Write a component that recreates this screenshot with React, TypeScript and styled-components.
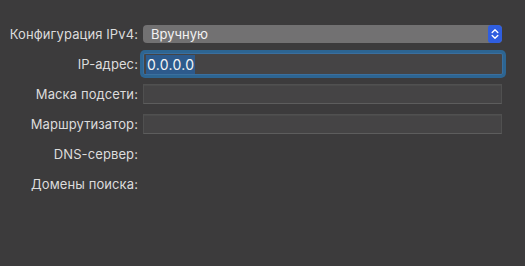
import React from 'react';
import styled, { createGlobalStyle } from 'styled-components';

const Global = createGlobalStyle`
  html, body {
    margin: 0;
    padding: 0;
    background: #3c3b3c;
  }
  body {
    font-family: Inter, "Noto Sans", "DejaVu Sans", sans-serif;
    -webkit-font-smoothing: antialiased;
  }
`

const Panel = styled.div`
  width: 525px;
  height: 266px;
  box-sizing: border-box;
  padding: 19px 22px 0 8px;
  display: grid;
  grid-template-columns: 130px 1fr;
  grid-auto-rows: 30px;
  column-gap: 4px;
  align-items: center;
`

const Label = styled.div`
  text-align: right;
  font-size: 13px;
  color: #dcdcdc;
  letter-spacing: 0.1px;
  white-space: nowrap;
`

const Popup = styled.div`
  height: 18px;
  margin-left: 1px;
  margin-right: 1px;
  border-radius: 4px;
  background: #727172;
  display: flex;
  align-items: center;
  justify-content: space-between;
  padding-left: 8px;
  font-size: 13px;
  color: #f2f2f2;
  overflow: hidden;
`

const Stepper = styled.div`
  width: 14px;
  height: 18px;
  background: #2f5ee0;
  border-radius: 3px;
  display: flex;
  align-items: center;
  justify-content: center;
`

const Field = styled.div<{ focused?: boolean }>`
  height: ${p => (p.focused ? '22px' : '20px')};
  box-sizing: border-box;
  margin-left: 1px;
  margin-right: ${p => (p.focused ? '0' : '1px')};
  background: #454445;
  border: 1px solid ${p => (p.focused ? '#3a6f9e' : '#505050')};
  border-bottom-color: ${p => (p.focused ? '#3a6f9e' : '#5d5d5d')};
  box-shadow: ${p => (p.focused ? '0 0 0 3px #2d6592' : 'inset 0 1px 0 #4b4b4b')};
  border-radius: ${p => (p.focused ? '2px' : '0')};
  display: flex;
  align-items: center;
  padding-left: 2px;
  font-size: 14px;
  color: #f4f4f4;
`

const Selected = styled.span`
  background: #2d5a8c;
  padding: 1px 1px;
  letter-spacing: 0.3px;
`

const Chevrons = () => (
  <svg width="8" height="12" viewBox="0 0 8 12">
    <path d="M1.2 4.5 L4 1.8 L6.8 4.5" fill="none" stroke="#fff" strokeWidth="1.4" strokeLinecap="round" strokeLinejoin="round" />
    <path d="M1.2 7.5 L4 10.2 L6.8 7.5" fill="none" stroke="#fff" strokeWidth="1.4" strokeLinecap="round" strokeLinejoin="round" />
  </svg>
)

function App() {
  return (
    <Panel>
      <Global />
      <Label>Конфигурация IPv4:</Label>
      <Popup>
        Вручную
        <Stepper><Chevrons /></Stepper>
      </Popup>

      <Label>IP-адрес:</Label>
      <Field focused><Selected>0.0.0.0</Selected></Field>

      <Label>Маска подсети:</Label>
      <Field />

      <Label>Маршрутизатор:</Label>
      <Field />

      <Label>DNS-сервер:</Label>
      <div />

      <Label>Домены поиска:</Label>
      <div />
    </Panel>
  );
}

export default App;
